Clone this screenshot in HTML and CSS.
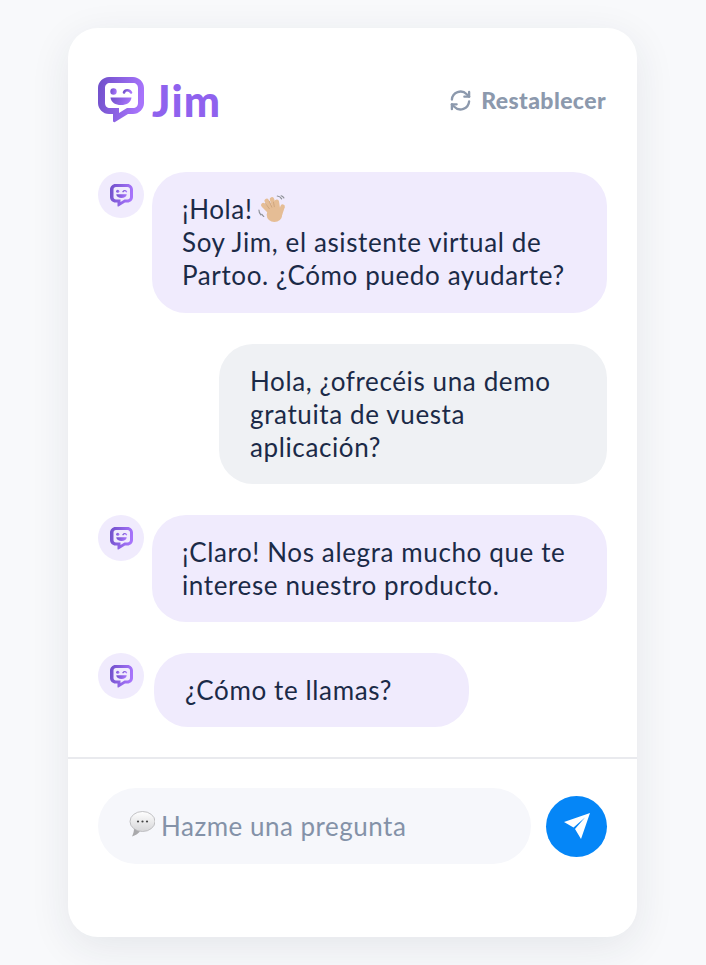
FILE: index.html
```html
<!DOCTYPE html>
<html lang="es">
  <head>
    <meta charset="UTF-8" />
    <meta name="viewport" content="width=device-width, initial-scale=1.0" />
    <title>Jim</title>
    <link rel="stylesheet" href="styles.css">
  </head>
  <body>
    <svg class="defs" width="0" height="0">
      <defs>
        <linearGradient id="logoGrad" x1="0" y1="0" x2="1" y2="0.2">
          <stop offset="0" stop-color="#6f4fc9" />
          <stop offset="1" stop-color="#a774fb" />
        </linearGradient>
        <linearGradient id="askGrad" x1="0" y1="0" x2="0" y2="1">
          <stop offset="0" stop-color="#ffffff" />
          <stop offset="1" stop-color="#d6d6d8" />
        </linearGradient>
        <symbol id="bot" viewBox="0 0 46 46">
          <path fill="url(#logoGrad)" fill-rule="evenodd" d="M11 0h24c6 0 11 5 11 11v15c0 6-5 11-11 11h-5L17 45c-1 .5-2 0-2-1v-7h-4C5 37 0 32 0 26V11C0 5 5 0 11 0zm1 6c-3 0-5 2-5 5v15c0 3 2 5 5 5h9v5l8-5h6c3 0 5-2 5-5V11c0-3-2-5-5-5z" />
          <circle cx="15.500" cy="14.500" r="3.200" fill="url(#logoGrad)" />
          <path d="M26 15.500c1-3 5.500-3 7 0" fill="none" stroke="url(#logoGrad)" stroke-width="2.600" stroke-linecap="round" />
          <path d="M12.500 20.500h21c-.5 5-5 7.500-10.500 7.500s-10-2.500-10.500-7.500z" fill="url(#logoGrad)" />
        </symbol>
      </defs>
    </svg>

    <main class="card">
      <header class="top">
        <div class="brand">
          <svg class="logo" viewBox="0 0 46 46"><use href="#bot" /></svg>
          <span class="brand-name">Jim</span>
        </div>
        <div class="reset">
          <svg class="reset-icon" viewBox="0 0 24 24" fill="none" stroke="#8c99ad" stroke-width="2.400" stroke-linecap="round" stroke-linejoin="round">
            <path d="M3 11a9 9 0 0 1 15.500-5.500L21 8" />
            <path d="M21 3v5h-5" />
            <path d="M21 13a9 9 0 0 1-15.500 5.500L3 16" />
            <path d="M3 21v-5h5" />
          </svg>
          <span>Restablecer</span>
        </div>
      </header>

      <section class="chat">
        <div class="row">
          <div class="avatar"><svg viewBox="0 0 46 46"><use href="#bot" /></svg></div>
          <div class="bubble bot greeting">
            ¡Hola!
            <svg class="wave" viewBox="0 0 30 30">
              <g fill="none" stroke="#e5bd95" stroke-width="4.600" stroke-linecap="round">
                <path d="M16 20 6.500 10.500" />
                <path d="M17 18 10 6" />
                <path d="M19.500 17 15.500 4.500" />
                <path d="M22 17 20.500 7" />
                <path d="M23.500 21 26.500 12" />
              </g>
              <ellipse cx="18" cy="20.500" rx="8" ry="7.500" fill="#e5bd95" />
              <path fill="none" stroke="#c99f78" stroke-width=".8" d="M13 14.500 8.500 8.500M15.500 13 12.500 6M18 12.500 17 7" />
              <path fill="none" stroke="#8d9097" stroke-width="1.200" stroke-linecap="round" d="M2 15.500c0 2 .6 3.500 2 5M5 20c.5 1 1 1.500 2 2.200M21 1c2 .2 3.500 1.200 4.500 3M25 .8c1.400.4 2 1 2.800 2.200" />
            </svg>
            <br>Soy Jim, el asistente virtual de<br>Partoo. ¿Cómo puedo ayudarte?
          </div>
        </div>

        <div class="row user-row">
          <div class="bubble user">Hola, ¿ofrecéis una demo<br>gratuita de vuesta<br>aplicación?</div>
        </div>

        <div class="row">
          <div class="avatar"><svg viewBox="0 0 46 46"><use href="#bot" /></svg></div>
          <div class="bubble bot">¡Claro! Nos alegra mucho que te<br>interese nuestro producto.</div>
        </div>

        <div class="row">
          <div class="avatar"><svg viewBox="0 0 46 46"><use href="#bot" /></svg></div>
          <div class="bubble bot short">¿Cómo te llamas?</div>
        </div>
      </section>

      <footer class="composer">
        <div class="ask">
          <svg class="ask-icon" viewBox="0 0 26 26">
            <path fill="#a9a9ab" d="M5 17c0 3-.5 5.500-2 8.500 3.500-1 6-2.800 8-5z" />
            <ellipse cx="13.500" cy="10.500" rx="12.500" ry="10" fill="url(#askGrad)" stroke="#b4b4b6" stroke-width=".8" />
            <circle cx="9" cy="10.500" r="1.100" fill="#444" />
            <circle cx="13.500" cy="10.500" r="1.100" fill="#444" />
            <circle cx="18" cy="10.500" r="1.100" fill="#444" />
          </svg>
          <span>Hazme una pregunta</span>
        </div>
        <button class="send" aria-label="Enviar">
          <svg viewBox="0 0 26 26">
            <path fill="#fff" d="M26 0 0 9l9.500 5.500L21 4.500 11 16l6 10z" />
          </svg>
        </button>
      </footer>
    </main>
  </body>
</html>
```

FILE: styles.css
```css
body {
  margin: 0;
  height: 965px;
  overflow: hidden;
  background-color: #f8f9fb;
  font-family: 'Lato', sans-serif;
  color: #1b2a47;
}

.defs {
  position: absolute;
}

.card {
  width: 569px;
  height: 909px;
  margin: 28px 0 0 68px;
  background-color: #fff;
  border-radius: 30px;
  box-shadow: 0 10px 40px rgba(30, 40, 70, 0.09);
  box-sizing: border-box;
}

.top {
  display: flex;
  justify-content: space-between;
  align-items: center;
  height: 144px;
  padding: 0 31px 0 30px;
}

.brand {
  display: flex;
  align-items: center;
  gap: 8px;
}

.logo {
  width: 46px;
  height: 46px;
}

.brand-name {
  font-size: 43px;
  font-weight: 900;
  letter-spacing: 1.2px;
  color: #8f62ee;
}

.reset {
  display: flex;
  align-items: center;
  gap: 9px;
  font-size: 23px;
  font-weight: 900;
  letter-spacing: 0.4px;
  color: #8c99ad;
}

.reset-icon {
  width: 23px;
  height: 23px;
}

.chat {
  display: flex;
  flex-direction: column;
  gap: 31px;
  height: 587px;
  padding: 0 30px;
  box-sizing: border-box;
  border-bottom: 2px solid #e9eaee;
}

.row {
  display: flex;
  align-items: flex-start;
  gap: 8px;
}

.user-row {
  justify-content: flex-end;
}

.avatar {
  display: flex;
  align-items: center;
  justify-content: center;
  width: 46px;
  height: 46px;
  flex-shrink: 0;
  border-radius: 50%;
  background-color: #f0ebfd;
}

.avatar svg {
  width: 23px;
  height: 23px;
}

.bubble {
  font-size: 26px;
  letter-spacing: 0.62px;
  line-height: 33px;
  padding: 21px 30px 20px;
  border-radius: 34px;
  box-sizing: border-box;
}

.bot {
  width: 455px;
  background-color: #f0ebfd;
}

.greeting {
  padding-bottom: 21px;
}

.short {
  width: 315px;
  margin-left: 2px;
  padding-left: 31px;
}

.user {
  width: 388px;
  padding-left: 31px;
  background-color: #eff1f4;
}

.wave {
  width: 29px;
  height: 29px;
  margin-left: -3px;
  vertical-align: -5px;
}

.composer {
  display: flex;
  align-items: center;
  justify-content: space-between;
  padding: 29px 30px 0;
}

.ask {
  display: flex;
  align-items: center;
  gap: 6px;
  width: 433px;
  height: 76px;
  padding-left: 31px;
  box-sizing: border-box;
  border-radius: 38px;
  background-color: #f6f7fb;
  font-size: 26px;
  letter-spacing: 0.5px;
  color: #8492a8;
}

.ask-icon {
  width: 26px;
  height: 26px;
  margin-top: -4px;
}

.send {
  display: flex;
  align-items: center;
  justify-content: center;
  width: 61px;
  height: 61px;
  padding: 0;
  border: none;
  border-radius: 50%;
  background-color: #0586f7;
}

.send svg {
  width: 26px;
  height: 26px;
}
```
